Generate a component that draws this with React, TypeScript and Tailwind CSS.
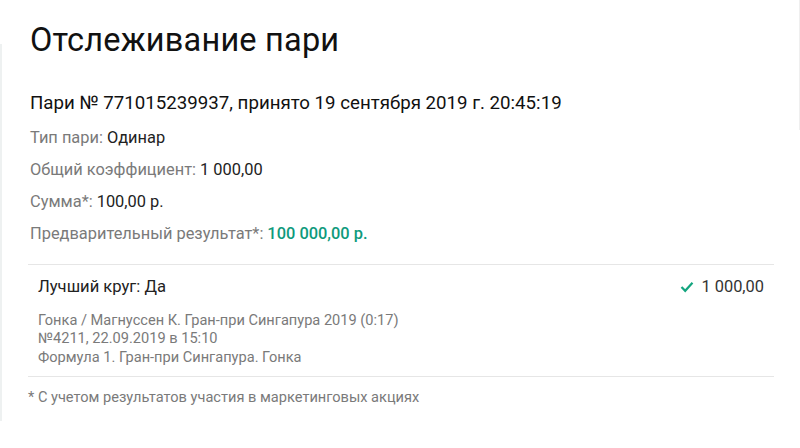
import React from 'react';

const Row: React.FC<{ label: string; value: string; green?: boolean }> = ({ label, value, green }) => (
  <div className="h-8 flex items-center text-[16.4px]">
    <span className="text-[#7a7a7a]">{label}</span>
    <span className={green ? 'ml-1 font-medium text-[#0e9a7c]' : 'ml-1 text-[#222]'}>{value}</span>
  </div>
);

export default function App() {
  return (
    <div className="w-[800px] h-[448px] bg-white relative" style={{ fontFamily: 'Roboto, "Noto Sans", sans-serif' }}>
      <div className="absolute left-0 top-[44px] h-[377px] w-[2px] bg-[#eef1f1]" />
      <div className="absolute right-0 top-0 h-[130px] w-[1px] bg-[#efefef]" />
      <div className="pl-[30px] pr-[26px] pt-[19px]">
        <h1 className="text-[32.5px] leading-[42px] text-[#111] tracking-[0.2px]">Отслеживание пари</h1>
        <div className="mt-[29px] text-[18.7px] leading-[26px] text-[#111]">
          Пари № 771015239937, принято 19 сентября 2019 г. 20:45:19
        </div>
        <div className="mt-[6px] flex flex-col">
          <Row label="Тип пари:" value="Одинар" />
          <Row label="Общий коэффициент:" value="1 000,00" />
          <Row label="Сумма*:" value="100,00 р." />
          <Row label="Предварительный результат*:" value="100 000,00 р." green />
        </div>
        <div className="mt-[14px] ml-[-2px] border-t border-[#e6e6e6] pl-[10px] pr-[10px] pt-[10px] pb-[10px]">
          <div className="flex items-center justify-between">
            <span className="text-[16.6px] leading-[24px] text-[#222]">Лучший круг: Да</span>
            <span className="flex items-center gap-[7px] text-[16.4px] text-[#333]">
              <svg width="14" height="12" viewBox="0 0 14 12" fill="none">
                <path d="M1.5 6 L5.2 9.8 L12.5 1.8" stroke="#14a57f" strokeWidth="2.2" />
              </svg>
              1 000,00
            </span>
          </div>
          <div className="mt-[11px] text-[14.6px] leading-[18.5px] text-[#7a7a7a]">
            <div>Гонка / Магнуссен К. Гран-при Сингапура 2019 (0:17)</div>
            <div>№4211, 22.09.2019 в 15:10</div>
            <div>Формула 1. Гран-при Сингапура. Гонка</div>
          </div>
        </div>
        <div className="ml-[-2px] border-t border-[#e6e6e6] pt-[10px] text-[14.6px] leading-[20px] text-[#7a7a7a]">
          * С учетом результатов участия в маркетинговых акциях
        </div>
      </div>
    </div>
  );
}
